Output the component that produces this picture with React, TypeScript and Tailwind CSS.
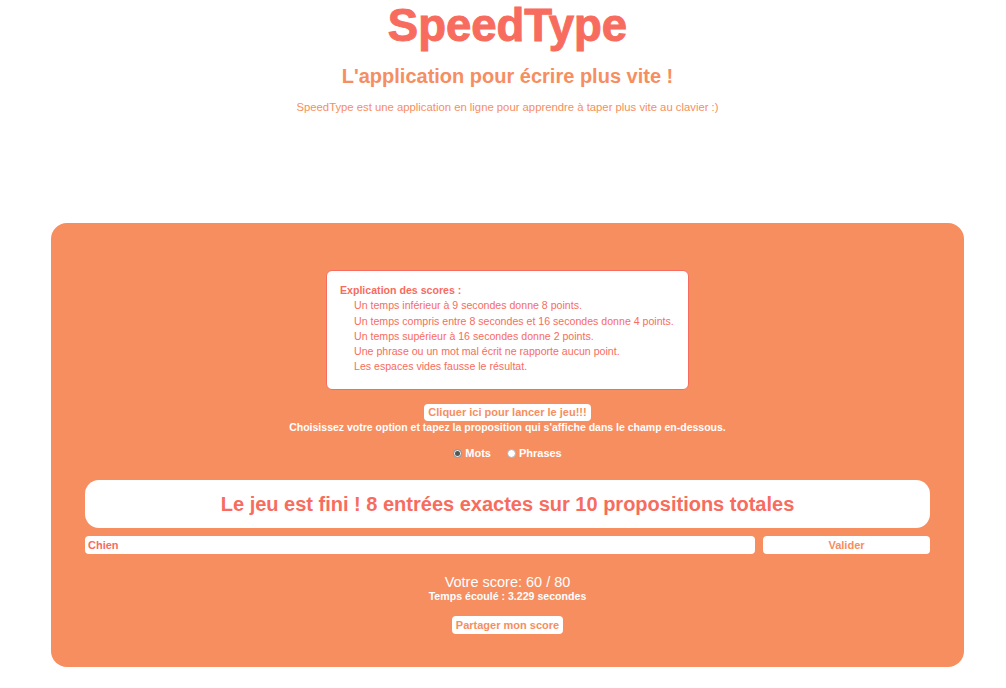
const rules = [
    "Un temps inférieur à 9 secondes donne 8 points.",
    "Un temps compris entre 8 secondes et 16 secondes donne 4 points.",
    "Un temps supérieur à 16 secondes donne 2 points.",
    "Une phrase ou un mot mal écrit ne rapporte aucun point.",
    "Les espaces vides fausse le résultat.",
];

const App = () => {
    return (
        <div className="min-h-[688px] bg-white font-['Liberation_Sans',Arial,sans-serif]">
            <header className="flex flex-col items-center pl-[9px]">
                <h1 className="mt-[3px] text-[45.5px] leading-[46px] font-bold text-[#f76c5e] [-webkit-text-stroke:1px_#f76c5e]">SpeedType</h1>
                <h2 className="mt-[15px] text-[20px] leading-[24px] font-bold text-[#f68e5f]">L'application pour écrire plus vite !</h2>
                <p className="mt-[13px] text-[11.3px] leading-[13px] text-[#f68e5f]">
                    SpeedType est une application en ligne pour apprendre à taper plus vite au clavier :)
                </p>
            </header>

            <main className="mt-[109px] ml-[51px] w-[913px] h-[444px] rounded-[16px] bg-[#f68e5f] px-[34px] pt-[47px] flex flex-col items-center">
                <div className="w-[363px] h-[120px] rounded-[6px] border border-[#f76c5e] bg-white pl-[13px] pt-[12px] text-[10.6px] leading-[15.3px] text-[#f76c5e]">
                    <p className="font-bold">Explication des scores :</p>
                    <ul className="pl-[14px]">
                        {rules.map((rule) => (
                            <li key={rule}>{rule}</li>
                        ))}
                    </ul>
                </div>

                <button className="mt-[14px] h-[17px] rounded-[4px] bg-white px-[4px] text-[11px] leading-[17px] font-bold text-[#f68e5f]">
                    Cliquer ici pour lancer le jeu!!!
                </button>
                <p className="text-[10.5px] leading-[13px] font-bold text-white">
                    Choisissez votre option et tapez la proposition qui s'affiche dans le champ en-dessous.
                </p>

                <div className="mt-[11px] flex items-center gap-[16px] text-[11px] font-bold text-white">
                    <label className="flex items-center gap-[3px]">
                        <span className="flex h-[9px] w-[9px] items-center justify-center rounded-full border border-[#8a8a8a] bg-[#e8e8e8]">
                            <span className="h-[5px] w-[5px] rounded-full bg-[#555]" />
                        </span>
                        Mots
                    </label>
                    <label className="flex items-center gap-[3px]">
                        <span className="h-[9px] w-[9px] rounded-full border border-[#b0b0b0] bg-white" />
                        Phrases
                    </label>
                </div>

                <div className="mt-[18px] flex h-[48px] w-full items-center justify-center rounded-[14px] bg-white">
                    <p className="text-[20px] font-bold text-[#f76c5e]">Le jeu est fini ! 8 entrées exactes sur 10 propositions totales</p>
                </div>

                <div className="mt-[8px] flex w-full gap-[8px]">
                    <div className="h-[18px] flex-1 rounded-[4px] bg-white px-[3px] text-[11px] leading-[18px] font-bold text-[#f76c5e]">Chien</div>
                    <button className="h-[18px] w-[167px] rounded-[4px] bg-white text-[11px] leading-[18px] font-bold text-[#f68e5f]">Valider</button>
                </div>

                <p className="mt-[20px] text-[14.5px] leading-[16px] text-white">Votre score: 60 / 80</p>
                <p className="text-[10.6px] leading-[12px] font-bold text-white">Temps écoulé : 3.229 secondes</p>

                <button className="mt-[14px] h-[18px] rounded-[4px] bg-white px-[4px] text-[11px] leading-[18px] font-bold text-[#f68e5f]">
                    Partager mon score
                </button>
            </main>
        </div>
    );
};

export default App;
